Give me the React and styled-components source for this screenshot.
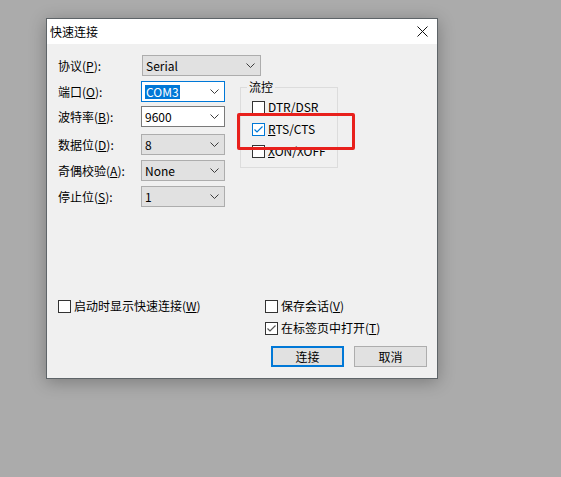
import styled, { createGlobalStyle } from 'styled-components';

const GlobalStyle = createGlobalStyle`
  html, body {
    margin: 0;
    padding: 0;
    background: #ababab;
    width: 561px;
    height: 477px;
    overflow: hidden;
  }
  body {
    font-family: "Noto Sans CJK SC", "Noto Sans", sans-serif;
    font-size: 12px;
    color: #000;
  }
`;

const leftRows = [
  { label: '协议', key: 'P', value: 'Serial', gap: 0, variant: 'gray', wide: true },
  { label: '端口', key: 'O', value: 'COM3', gap: 5, variant: 'focus' },
  { label: '波特率', key: 'B', value: '9600', gap: 4, variant: 'white' },
  { label: '数据位', key: 'D', value: '8', gap: 7, variant: 'gray' },
  { label: '奇偶校验', key: 'A', value: 'None', gap: 5, variant: 'gray' },
  { label: '停止位', key: 'S', value: '1', gap: 5, variant: 'gray' },
];

function Chevron() {
  return (
    <svg width="9" height="5" viewBox="0 0 9 5">
      <path d="M0.5 0.5 L4.5 4.5 L8.5 0.5" fill="none" stroke="#3c3c3c" strokeWidth="1" />
    </svg>
  );
}

function CheckMark({ color }) {
  return (
    <svg width="11" height="11" viewBox="0 0 11 11">
      <path d="M1.5 5.5 L4 8 L9.5 2.5" fill="none" stroke={color} strokeWidth="1.2" />
    </svg>
  );
}

function Check({ checked, blue, children }) {
  return (
    <CheckRow>
      <Box $blue={blue}>{checked && <CheckMark color={blue ? '#0078d7' : '#555'} />}</Box>
      <span>{children}</span>
    </CheckRow>
  );
}

export default function App() {
  return (
    <>
      <GlobalStyle />
      <Dialog>
        <TitleBar>
          <span>快速连接</span>
          <svg width="11" height="11" viewBox="0 0 11 11">
            <path d="M0.5 0.5 L10.5 10.5 M10.5 0.5 L0.5 10.5" stroke="#111" strokeWidth="1" />
          </svg>
        </TitleBar>
        <Body>
          <TopSection>
            <LeftColumn>
              {leftRows.map((r) => (
                <FieldRow key={r.key} $gap={r.gap}>
                  <Label>
                    {r.label}(<u>{r.key}</u>):
                  </Label>
                  <Combo $variant={r.variant} $wide={r.wide}>
                    {r.variant === 'focus' ? <Selected>{r.value}</Selected> : <span>{r.value}</span>}
                    <Chevron />
                  </Combo>
                </FieldRow>
              ))}
            </LeftColumn>
            <GroupBox>
              <legend>流控</legend>
              <Check>DTR/DSR</Check>
              <Check checked blue>
                <u>R</u>TS/CTS
              </Check>
              <Check>
                <u>X</u>ON/XOFF
              </Check>
            </GroupBox>
          </TopSection>
          <BottomSection>
            <OptionGrid>
              <Check>
                启动时显示快速连接(<u>W</u>)
              </Check>
              <Check>
                保存会话(<u>V</u>)
              </Check>
              <span />
              <Check checked>
                在标签页中打开(<u>T</u>)
              </Check>
            </OptionGrid>
            <ButtonRow>
              <Button $primary>连接</Button>
              <Button>取消</Button>
            </ButtonRow>
          </BottomSection>
        </Body>
        <Highlight />
      </Dialog>
    </>
  );
}

const Dialog = styled.div`
  position: relative;
  box-sizing: border-box;
  margin: 18px 0 0 46px;
  width: 392px;
  height: 361px;
  border: 1px solid #5e6468;
  background: #f0f0f0;
  box-shadow: 0 3px 16px rgba(0, 0, 0, 0.28);
  display: flex;
  flex-direction: column;
`;

const TitleBar = styled.div`
  height: 25px;
  flex: none;
  background: #fff;
  display: flex;
  align-items: center;
  justify-content: space-between;
  padding: 0 9px 0 3px;
  line-height: 16px;
`;

const Body = styled.div`
  flex: 1;
  display: flex;
  flex-direction: column;
  padding: 11px 10px 11px 11px;
`;

const TopSection = styled.div`
  display: flex;
  align-items: flex-start;
`;

const LeftColumn = styled.div`
  display: flex;
  flex-direction: column;
  width: 167px;
  flex: none;
`;

const FieldRow = styled.div`
  display: flex;
  align-items: center;
  margin-top: ${(p) => p.$gap}px;
`;

const Label = styled.div`
  width: 83px;
  flex: none;
  line-height: 16px;
  white-space: nowrap;
`;

const Combo = styled.div`
  box-sizing: border-box;
  flex: none;
  width: ${(p) => (p.$wide ? 119 : 84)}px;
  margin-left: ${(p) => (p.$wide ? 1 : 0)}px;
  height: 21px;
  display: flex;
  align-items: center;
  justify-content: space-between;
  padding: 0 5px 0 3px;
  line-height: 14px;
  background: ${(p) => (p.$variant === 'gray' ? '#e1e1e1' : '#fff')};
  border: 1px solid
    ${(p) => (p.$variant === 'focus' ? '#0078d7' : p.$variant === 'white' ? '#7a7a7a' : '#adadad')};
`;

const Selected = styled.span`
  background: #0078d7;
  color: #fff;
  padding: 0 1px;
`;

const GroupBox = styled.fieldset`
  box-sizing: border-box;
  margin: 24px 0 0 15px;
  width: 98px;
  min-width: 0;
  border: 1px solid #dcdcdc;
  padding: 1px 0 5px 6px;

  legend {
    padding: 0 2px;
    line-height: 16px;
  }

  & > div {
    height: 22px;
    margin-left: 5px;
  }
`;

const CheckRow = styled.div`
  display: flex;
  align-items: center;
  gap: 3px;
  height: 16px;
  line-height: 16px;
  white-space: nowrap;
`;

const Box = styled.div`
  box-sizing: border-box;
  width: 13px;
  height: 13px;
  flex: none;
  background: #fff;
  border: 1px solid ${(p) => (p.$blue ? '#0078d7' : '#333')};
  display: flex;
  align-items: center;
  justify-content: center;
`;

const BottomSection = styled.div`
  margin-top: auto;
  display: flex;
  flex-direction: column;
`;

const OptionGrid = styled.div`
  display: grid;
  grid-template-columns: 207px 1fr;
  row-gap: 6px;
`;

const ButtonRow = styled.div`
  display: flex;
  justify-content: flex-end;
  gap: 10px;
  margin-top: 10px;
`;

const Button = styled.div`
  box-sizing: border-box;
  width: 73px;
  height: 21px;
  display: flex;
  align-items: center;
  justify-content: center;
  background: #e1e1e1;
  border: ${(p) => (p.$primary ? '2px solid #0078d7' : '1px solid #adadad')};
  line-height: 16px;
`;

const Highlight = styled.div`
  position: absolute;
  left: 190px;
  top: 94px;
  width: 118px;
  height: 37px;
  box-sizing: border-box;
  border: 3px solid #e8201c;
  border-radius: 2px;
`;
